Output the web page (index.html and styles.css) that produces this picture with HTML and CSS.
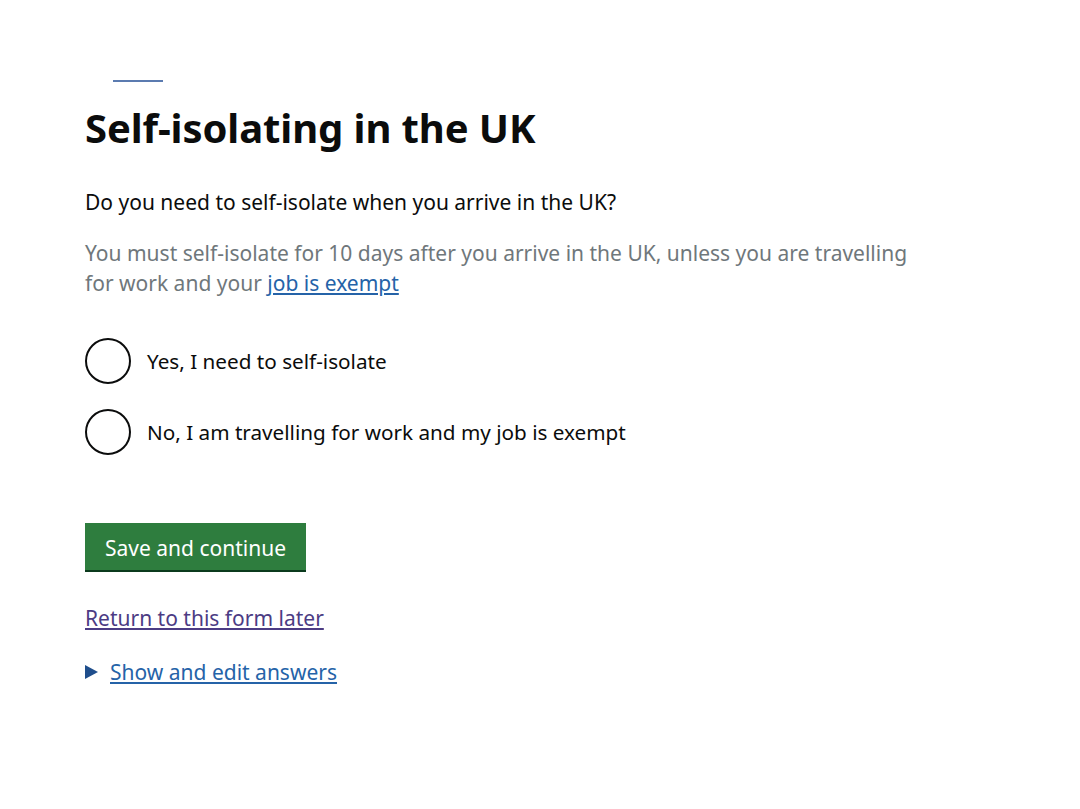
FILE: index.html
```html
<!DOCTYPE html>
<html lang="en">
<head>
<meta charset="utf-8">
<title>Self-isolating in the UK</title>
<link rel="stylesheet" href="styles.css">
</head>
<body>
<main class="page">
  <div class="back-line"></div>
  <h1 class="title">Self-isolating in the UK</h1>
  <p class="question">Do you need to self-isolate when you arrive in the UK?</p>
  <p class="hint">You must self-isolate for 10 days after you arrive in the UK, unless you are travelling for work and your <a class="link" href="#">job is exempt</a></p>
  <div class="radios">
    <label class="radio"><span class="radio-circle"></span><span class="radio-label">Yes, I need to self-isolate</span></label>
    <label class="radio"><span class="radio-circle"></span><span class="radio-label">No, I am travelling for work and my job is exempt</span></label>
  </div>
  <button class="button" type="button">Save and continue</button>
  <p class="later"><a class="link visited" href="#">Return to this form later</a></p>
  <div class="details"><span class="triangle"></span><a class="link" href="#">Show and edit answers</a></div>
</main>
</body>
</html>
```
FILE: styles.css
```css
html, body {
  margin: 0;
  padding: 0;
  background: #ffffff;
}
body {
  font-family: "Noto Sans", "Liberation Sans", sans-serif;
  color: #0b0c0c;
}
.page {
  padding: 80px 0 0 85px;
  width: 840px;
}
.back-line {
  width: 50px;
  height: 2px;
  margin-left: 28px;
  background: #5b7bb0;
}
.title {
  margin: 21px 0 0 0;
  font-size: 40px;
  font-weight: 700;
  line-height: 50px;
  letter-spacing: -0.1px;
}
.question {
  margin: 34px 0 0 0;
  font-size: 21px;
  line-height: 30px;
}
.hint {
  margin: 21px 0 0 0;
  font-size: 21px;
  line-height: 30px;
  color: #6f777b;
}
.link {
  color: #2563a8;
  text-decoration: underline;
  text-underline-offset: 2px;
}
.link.visited {
  color: #4c3c84;
}
.radios {
  margin-top: 40px;
  display: flex;
  flex-direction: column;
  gap: 25px;
}
.radio {
  display: flex;
  align-items: center;
  gap: 16px;
}
.radio-circle {
  width: 42px;
  height: 42px;
  border: 2px solid #0b0c0c;
  border-radius: 50%;
}
.radio-label {
  font-size: 20.7px;
  line-height: 30px;
}
.button {
  margin-top: 68px;
  display: block;
  width: 221px;
  height: 47px;
  padding: 3px 0 0 0;
  border: 0;
  background: #2e7d3e;
  box-shadow: 0 2px 0 #0b3a1d;
  color: #ffffff;
  font-family: inherit;
  font-size: 21px;
  line-height: 44px;
  text-align: center;
}
.later {
  margin: 33px 0 0 0;
  font-size: 21px;
  line-height: 30px;
}
.details {
  margin-top: 24px;
  display: flex;
  align-items: center;
  gap: 12px;
  font-size: 21px;
  line-height: 30px;
}
.triangle {
  width: 0;
  height: 0;
  border-top: 7px solid transparent;
  border-bottom: 7px solid transparent;
  border-left: 13px solid #1f4e8c;
}
```
